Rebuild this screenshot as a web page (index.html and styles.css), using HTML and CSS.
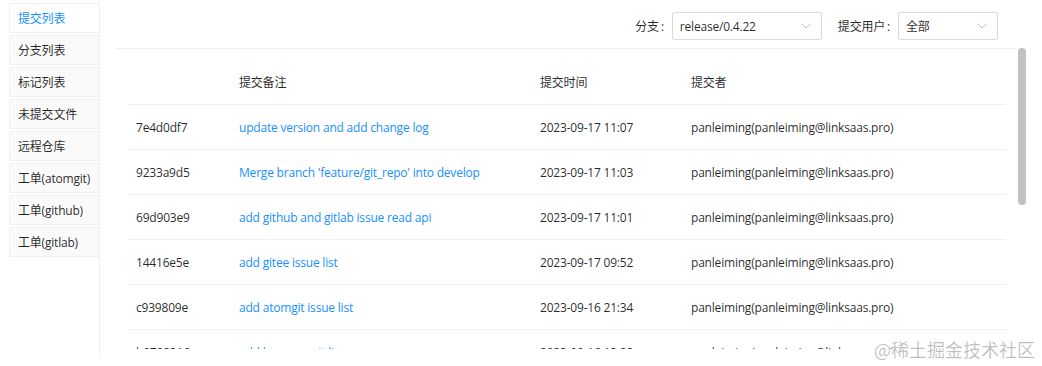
FILE: index.html
```html
<!DOCTYPE html>
<html lang="zh-CN">
<head>
<meta charset="utf-8">
<title>提交列表</title>
<link rel="stylesheet" href="styles.css">
</head>
<body>
<div class="app">
  <nav class="sidebar">
    <div class="tab active">提交列表</div>
    <div class="tab">分支列表</div>
    <div class="tab">标记列表</div>
    <div class="tab">未提交文件</div>
    <div class="tab">远程仓库</div>
    <div class="tab">工单(atomgit)</div>
    <div class="tab">工单(github)</div>
    <div class="tab">工单(gitlab)</div>
  </nav>
  <main class="main">
    <div class="toolbar">
      <div class="field">
        <span class="label">分支</span><span class="colon">:</span>
        <div class="select select-branch">
          <span>release/0.4.22</span>
          <svg class="chev" width="10" height="6" viewBox="0 0 10 6"><path d="M0.5 0.5 L5 5 L9.5 0.5" fill="none" stroke="#c4c4c4" stroke-width="1"/></svg>
        </div>
      </div>
      <div class="field">
        <span class="label">提交用户</span><span class="colon">:</span>
        <div class="select select-user">
          <span>全部</span>
          <svg class="chev" width="10" height="6" viewBox="0 0 10 6"><path d="M0.5 0.5 L5 5 L9.5 0.5" fill="none" stroke="#c4c4c4" stroke-width="1"/></svg>
        </div>
      </div>
    </div>
    <div class="body">
      <div class="viewport">
        <div class="grid">
          <div class="row head">
            <div class="cell"></div>
            <div class="cell">提交备注</div>
            <div class="cell">提交时间</div>
            <div class="cell">提交者</div>
          </div>
          <div class="row">
            <div class="cell">7e4d0df7</div>
            <div class="cell link">update version and add change log</div>
            <div class="cell">2023-09-17 11:07</div>
            <div class="cell">panleiming(panleiming@linksaas.pro)</div>
          </div>
          <div class="row">
            <div class="cell">9233a9d5</div>
            <div class="cell link">Merge branch 'feature/git_repo' into develop</div>
            <div class="cell">2023-09-17 11:03</div>
            <div class="cell">panleiming(panleiming@linksaas.pro)</div>
          </div>
          <div class="row">
            <div class="cell">69d903e9</div>
            <div class="cell link">add github and gitlab issue read api</div>
            <div class="cell">2023-09-17 11:01</div>
            <div class="cell">panleiming(panleiming@linksaas.pro)</div>
          </div>
          <div class="row">
            <div class="cell">14416e5e</div>
            <div class="cell link">add gitee issue list</div>
            <div class="cell">2023-09-17 09:52</div>
            <div class="cell">panleiming(panleiming@linksaas.pro)</div>
          </div>
          <div class="row">
            <div class="cell">c939809e</div>
            <div class="cell link">add atomgit issue list</div>
            <div class="cell">2023-09-16 21:34</div>
            <div class="cell">panleiming(panleiming@linksaas.pro)</div>
          </div>
          <div class="row">
            <div class="cell">b0782316</div>
            <div class="cell link">add btn commit list</div>
            <div class="cell">2023-09-16 13:28</div>
            <div class="cell">panleiming(panleiming@linksaas.pro)</div>
          </div>
        </div>
      </div>
      <div class="track"><div class="thumb"></div></div>
    </div>
  </main>
  <div class="watermark">@稀土掘金技术社区</div>
</div>
</body>
</html>
```

FILE: styles.css
```css
* { box-sizing: border-box; }

html, body {
  margin: 0;
  padding: 0;
  background: #ffffff;
}

body {
  font-family: "Open Sans", "Noto Sans CJK SC", sans-serif;
  font-size: 12px;
  letter-spacing: -0.2px;
  color: rgba(0, 0, 0, 0.85);
}

.app {
  position: relative;
  display: flex;
  width: 1042px;
  height: 366px;
  overflow: hidden;
}

/* ---------- sidebar tabs ---------- */
.sidebar {
  flex: none;
  width: 100px;
  height: 358px;
  padding: 3px 0 0 9px;
  border-right: 1px solid #f0f0f0;
  display: flex;
  flex-direction: column;
  gap: 2px;
}

.tab {
  height: 30px;
  display: flex;
  align-items: center;
  padding-left: 8px;
  background: #fafafa;
  border: 1px solid #f0f0f0;
  border-right: none;
  border-radius: 2px 0 0 2px;
  white-space: nowrap;
  color: rgba(0, 0, 0, 0.85);
}

.tab.active {
  background: #ffffff;
  color: #1890ff;
}

/* ---------- main ---------- */
.main {
  flex: 1;
  min-width: 0;
  margin: 0 15px 0 16px;
  display: flex;
  flex-direction: column;
}

.toolbar {
  height: 49px;
  margin-right: 11px;
  padding: 4px 18px 0 0;
  border-bottom: 1px solid #f0f0f0;
  display: flex;
  justify-content: flex-end;
  align-items: center;
  gap: 16px;
}

.field {
  display: flex;
  align-items: center;
}

.label {
  white-space: nowrap;
}

.colon {
  margin: 0 8px 0 2px;
}

.select {
  height: 28px;
  border: 1px solid #d9d9d9;
  border-radius: 2px;
  background: #fff;
  display: flex;
  align-items: center;
  justify-content: space-between;
  padding: 0 10px 0 7px;
}

.select-branch { width: 150px; }
.select-user { width: 100px; }

.chev { display: block; }

/* ---------- table body with scrollbar ---------- */
.body {
  height: 301px;
  margin-top: -1px;
  display: flex;
}

.viewport {
  flex: 1;
  min-width: 0;
  overflow: hidden;
  padding: 12px 11px 0 12px;
}

.track {
  flex: none;
  width: 10px;
  padding: 0 1px;
}

.thumb {
  height: 157px;
  background: #c1c1c1;
  border-radius: 4px;
}

.grid {
  display: flex;
  flex-direction: column;
}

.row {
  display: grid;
  grid-template-columns: 103px 301px 151px 1fr;
  height: 45px;
  flex: none;
  border-bottom: 1px solid #f0f0f0;
  align-items: center;
}

.cell {
  padding: 0 8px;
  white-space: nowrap;
  overflow: hidden;
}

.link {
  color: #1890ff;
}

/* ---------- watermark ---------- */
.watermark {
  position: absolute;
  right: 7px;
  bottom: 4px;
  font-family: "Noto Sans CJK SC", sans-serif;
  font-size: 18px;
  font-weight: 400;
  letter-spacing: 0;
  color: rgba(0, 0, 0, 0.25);
  white-space: nowrap;
}
```
